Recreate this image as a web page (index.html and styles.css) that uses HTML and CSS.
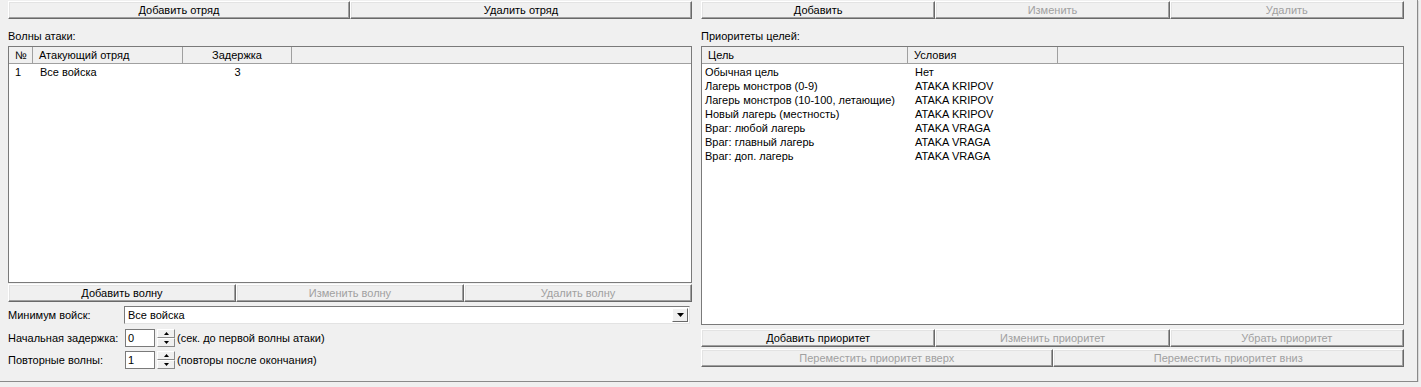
FILE: index.html
```html
<!DOCTYPE html>
<html lang="ru">
<head>
    <meta charset="UTF-8">
    <title>Атака</title>
    <link rel="stylesheet" href="styles.css">
</head>
<body>
    <div class="form">
        <div class="col left">
            <div class="btn-row top">
                <button class="btn">Добавить отряд</button>
                <button class="btn">Удалить отряд</button>
            </div>
            <div class="caption">Волны атаки:</div>
            <div class="list waves">
                <div class="head">
                    <div class="hcell c-num">№</div>
                    <div class="hcell c-unit">Атакующий отряд</div>
                    <div class="hcell c-delay">Задержка</div>
                    <div class="hcell c-fill"></div>
                </div>
                <div class="row">
                    <div class="cell c-num">1</div>
                    <div class="cell c-unit">Все войска</div>
                    <div class="cell c-delay">3</div>
                </div>
            </div>
            <div class="btn-row under-list">
                <button class="btn">Добавить волну</button>
                <button class="btn" disabled>Изменить волну</button>
                <button class="btn" disabled>Удалить волну</button>
            </div>
            <div class="field combo-row">
                <span class="field-label">Минимум войск:</span>
                <div class="combo">
                    <span class="combo-text">Все войска</span>
                    <span class="combo-btn">
                        <svg width="7" height="4" viewBox="0 0 7 4"><path d="M0 0H7L3.5 4Z" fill="#000"/></svg>
                    </span>
                </div>
            </div>
            <div class="field spin-row first">
                <span class="field-label">Начальная задержка:</span>
                <div class="spin-input">0</div>
                <div class="spinner">
                    <span class="spin-btn"><svg width="5" height="3" viewBox="0 0 5 3"><path d="M2.5 0L5 3H0Z" fill="#000"/></svg></span>
                    <span class="spin-btn"><svg width="5" height="3" viewBox="0 0 5 3"><path d="M0 0H5L2.5 3Z" fill="#000"/></svg></span>
                </div>
                <span class="note">(сек. до первой волны атаки)</span>
            </div>
            <div class="field spin-row">
                <span class="field-label">Повторные волны:</span>
                <div class="spin-input">1</div>
                <div class="spinner">
                    <span class="spin-btn"><svg width="5" height="3" viewBox="0 0 5 3"><path d="M2.5 0L5 3H0Z" fill="#000"/></svg></span>
                    <span class="spin-btn"><svg width="5" height="3" viewBox="0 0 5 3"><path d="M0 0H5L2.5 3Z" fill="#000"/></svg></span>
                </div>
                <span class="note">(повторы после окончания)</span>
            </div>
        </div>

        <div class="col right">
            <div class="btn-row top">
                <button class="btn">Добавить</button>
                <button class="btn" disabled>Изменить</button>
                <button class="btn" disabled>Удалить</button>
            </div>
            <div class="caption">Приоритеты целей:</div>
            <div class="list targets">
                <div class="head">
                    <div class="hcell c-goal">Цель</div>
                    <div class="hcell c-cond">Условия</div>
                    <div class="hcell c-fill"></div>
                </div>
                <div class="row"><div class="cell c-goal">Обычная цель</div><div class="cell c-cond">Нет</div></div>
                <div class="row"><div class="cell c-goal">Лагерь монстров (0-9)</div><div class="cell c-cond">ATAKA KRIPOV</div></div>
                <div class="row"><div class="cell c-goal">Лагерь монстров (10-100, летающие)</div><div class="cell c-cond">ATAKA KRIPOV</div></div>
                <div class="row"><div class="cell c-goal">Новый лагерь (местность)</div><div class="cell c-cond">ATAKA KRIPOV</div></div>
                <div class="row"><div class="cell c-goal">Враг: любой лагерь</div><div class="cell c-cond">ATAKA VRAGA</div></div>
                <div class="row"><div class="cell c-goal">Враг: главный лагерь</div><div class="cell c-cond">ATAKA VRAGA</div></div>
                <div class="row"><div class="cell c-goal">Враг: доп. лагерь</div><div class="cell c-cond">ATAKA VRAGA</div></div>
            </div>
            <div class="btn-row under-targets">
                <button class="btn">Добавить приоритет</button>
                <button class="btn" disabled>Изменить приоритет</button>
                <button class="btn" disabled>Убрать приоритет</button>
            </div>
            <div class="btn-row move">
                <button class="btn" disabled>Переместить приоритет вверх</button>
                <button class="btn" disabled>Переместить приоритет вниз</button>
            </div>
        </div>
    </div>
</body>
</html>
```

FILE: styles.css
```css
body {
    margin: 0;
    background: #f0f0f0;
    font-family: "Liberation Sans", Arial, sans-serif;
    font-size: 11px;
    color: #000;
}

.form {
    display: flex;
    width: 1418px;
    height: 382px;
    box-sizing: border-box;
    padding-top: 1px;
    border-right: 1px solid #8a8a8a;
    border-bottom: 1px solid #8a8a8a;
    box-shadow: 1px 1px 0 #dadada;
}

.col {
    display: flex;
    flex-direction: column;
}

.col.left {
    width: 684px;
    margin-left: 8px;
}

.col.right {
    width: 703px;
    margin-left: 9px;
}

/* buttons */
.btn-row {
    display: flex;
    height: 18px;
}

.btn {
    flex: 1;
    min-width: 0;
    height: 18px;
    margin: 0;
    padding: 0;
    background: #f0f0f0;
    border: 1px solid;
    border-color: #ffffff #696969 #696969 #ffffff;
    box-shadow: inset -1px -1px 0 #a0a0a0, inset 1px 1px 0 #e3e3e3;
    font-family: inherit;
    font-size: 11px;
    color: #000;
    line-height: 14px;
}

.btn:disabled {
    color: #a0a0a0;
}

.under-list {
    margin-top: 1px;
}

.under-targets {
    margin-top: 4px;
}

.btn-row.move {
    margin-top: 2px;
}

.caption {
    height: 17px;
    padding-top: 10px;
    line-height: 14px;
}

/* list views */
.list {
    box-sizing: border-box;
    background: #fff;
    border: 1px solid #7a7a7a;
}

.list.waves {
    height: 237px;
}

.list.targets {
    height: 279px;
}

.head {
    display: flex;
    height: 17px;
    box-sizing: border-box;
    background: #f0f0f0;
    border-bottom: 1px solid #a0a0a0;
    margin-bottom: 1px;
}

.hcell {
    box-sizing: border-box;
    line-height: 16px;
    padding-left: 6px;
    border-right: 1px solid #a0a0a0;
    white-space: nowrap;
}

.hcell.c-fill {
    flex: 1;
    border-right: none;
}

.row {
    display: flex;
    height: 14px;
    line-height: 14px;
}

.cell {
    box-sizing: border-box;
    white-space: nowrap;
    padding-left: 6px;
}

.c-num { width: 24px; }
.c-unit { width: 150px; }
.c-delay { width: 109px; text-align: center; padding-left: 0; }

.waves .cell.c-unit { padding-left: 7px; }

.c-goal { width: 206px; }
.c-cond { width: 150px; }

.targets .cell.c-goal { padding-left: 3px; }
.targets .cell.c-cond { padding-left: 7px; }

/* fields */
.field {
    display: flex;
    align-items: center;
    height: 18px;
}

.field-label {
    width: 116px;
    flex-shrink: 0;
}

.combo-row {
    margin-top: 4px;
}

.combo {
    display: flex;
    align-items: center;
    width: 566px;
    height: 18px;
    box-sizing: border-box;
    background: #fff;
    border: 1px solid;
    border-color: #7a7a7a #e3e3e3 #e3e3e3 #7a7a7a;
}

.combo-text {
    flex: 1;
    padding-left: 3px;
}

.combo-btn {
    display: flex;
    align-items: center;
    justify-content: center;
    width: 16px;
    height: 14px;
    margin-right: 1px;
    box-sizing: border-box;
    background: #f0f0f0;
    border: 1px solid;
    border-color: #ffffff #696969 #696969 #ffffff;
}

.spin-row {
    margin-top: 4px;
}

.spin-row.first {
    margin-top: 5px;
}

.spin-row .field-label {
    width: 117px;
}

.spin-input {
    width: 30px;
    height: 18px;
    box-sizing: border-box;
    border: 1px solid #7a7a7a;
    background: #fff;
    line-height: 16px;
    padding-left: 2px;
}

.spinner {
    display: flex;
    flex-direction: column;
    width: 18px;
    height: 18px;
    margin-left: 2px;
}

.spin-btn {
    display: flex;
    align-items: center;
    justify-content: center;
    height: 9px;
    box-sizing: border-box;
    background: #f0f0f0;
    border: 1px solid;
    border-color: #ffffff #8a8a8a #8a8a8a #ffffff;
}

.note {
    margin-left: 2px;
}
```
